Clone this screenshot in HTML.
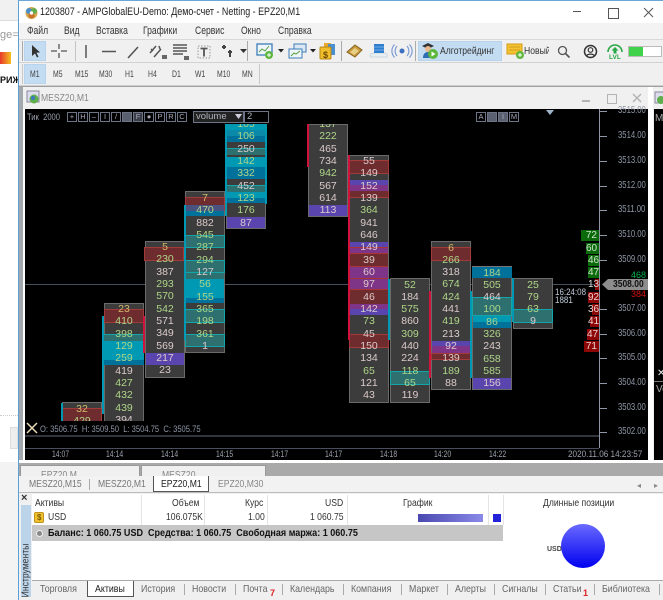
<!DOCTYPE html>
<html><head><meta charset="utf-8">
<style>
html,body{margin:0;padding:0;width:663px;height:600px;overflow:hidden;background:#fff;font-family:"Liberation Sans","DejaVu Sans",sans-serif}
div,span,svg,u,p{position:absolute;margin:0}
.t{white-space:nowrap;font-size:10.5px;color:#222;line-height:13px;transform:scaleX(.82);transform-origin:0 50%}
.o{white-space:nowrap;font-size:10px;line-height:13px}
.bg{background:#3c3c3c;border:1px solid #6a6a6a;box-sizing:border-box;width:40px}
.col{width:40px;text-align:center;font-size:10.5px;z-index:3}
.col b{display:block;height:12.33px;line-height:12.33px;font-weight:400;color:#dccbcb}
.col b.g{color:#aed688}
u{display:block;text-decoration:none;z-index:2;box-sizing:border-box}
.r{background:#6f2c2e;border:1px solid #a23a3a}
.n{background:#6f2c2e}
.e{background:#2e6f70;border:1px solid #14a5a8}
.f{background:#2e6f70}
.c{background:#0099b4}
.a{background:#00719a}
.v{background:#5a45ae}
.m{background:#7e3588}
.px{font-size:10px;color:#8e96a6;left:618px;white-space:nowrap;line-height:12px;z-index:4;transform:scaleX(.77);transform-origin:0 50%}
.tk{left:600px;width:7px;height:1px;background:#8f96a5;z-index:4}
.tm{top:449px;font-size:9.5px;color:#9aa1ae;line-height:12px;white-space:nowrap;transform:scaleX(.72);transform-origin:0 50%;z-index:6}
.d{font-size:10px;color:#ddd;text-align:right;height:11px;line-height:11px;box-sizing:border-box;padding-right:2px;z-index:4}
.dg{background:#0b6b0b;color:#cfe3cf}.dr{background:#8c0606;color:#f2d0d0}
.tb{font-size:9px;color:#444;line-height:12px;white-space:nowrap;top:68px;transform:scaleX(.76);transform-origin:0 50%}
.btn{border:1px solid #6d7486;box-sizing:border-box;width:10px;height:10px;top:112px;font-size:7.5px;color:#aab;line-height:8px;text-align:center;z-index:4}
.mn{font-size:11px;color:#333;top:25px;white-space:nowrap;line-height:13px;transform:scaleX(.78);transform-origin:0 50%}
.tab{font-size:10.5px;color:#666;white-space:nowrap;top:583px;line-height:13px;transform:scaleX(.84);transform-origin:0 50%}
.sep{width:1px;background:#aaa}
</style></head><body>

<!-- left browser remnant -->
<div style="left:0;top:0;width:18px;height:600px;background:#fff"></div>
<div style="left:0;top:0;width:18px;height:20px;background:#f1f1f1"></div>
<div style="left:0;top:20px;width:18px;height:1px;background:#ddd"></div>
<div style="left:0;top:29px;color:#999;font-size:11px;line-height:13px;width:18px;overflow:hidden;white-space:nowrap">ge=5</div>
<div style="left:0;top:52px;width:11px;height:12px;background:linear-gradient(90deg,#e8382a,#f5c020)"></div>
<div style="left:0;top:74px;font-weight:700;font-size:9px;line-height:13px;color:#111;width:18px;overflow:hidden;white-space:nowrap">РИЖ</div>
<div style="left:0;top:415px;width:18px;border-top:1px dotted #ccc"></div>
<div style="left:10px;top:427px;width:8px;height:22px;background:#eee;border:1px solid #ddd;box-sizing:border-box"></div>
<div style="left:0;top:462px;width:18px;height:138px;background:#f3f3f3"></div>

<!-- window frame -->
<div style="left:18px;top:0;width:645px;height:600px;background:#f0f0f0"></div>
<div style="left:18px;top:0;width:1px;height:600px;background:#5a9fd8"></div>
<div style="left:18px;top:0;width:645px;height:1px;background:#6aa6d8"></div>
<div style="left:19px;top:1px;width:644px;height:22px;background:#fff"></div>

<svg style="left:24px;top:5px" width="15" height="15" viewBox="0 0 15 15"><circle cx="7.5" cy="8" r="6" fill="#d8a84c"/><circle cx="5" cy="6" r="3" fill="#4a8fcb"/><circle cx="10" cy="6" r="3" fill="#5fae4e"/><circle cx="7.5" cy="10.5" r="3" fill="#c9702a"/><circle cx="7.5" cy="8" r="1.7" fill="#fff"/></svg>
<div class="t" style="left:40px;top:6px;font-size:11px;transform:scaleX(.81)">1203807 - AMPGlobalEU-Demo: Демо-счет - Netting - EPZ20,M1</div>
<div style="left:573px;top:11px;width:8px;height:1px;background:#555"></div>
<div style="left:608px;top:8px;width:9px;height:9px;border:1px solid #555"></div>
<svg style="left:643px;top:7px" width="11" height="11"><path d="M1 1L10 10M10 1L1 10" stroke="#555" fill="none"/></svg>

<!-- menu -->
<div style="left:19px;top:23px;width:644px;height:16px;background:#f3f3f3"></div>
<div class="mn" style="left:27px">Файл</div><div class="mn" style="left:64px">Вид</div><div class="mn" style="left:96px">Вставка</div><div class="mn" style="left:143px">Графики</div><div class="mn" style="left:195px">Сервис</div><div class="mn" style="left:241px">Окно</div><div class="mn" style="left:278px">Справка</div>

<!-- toolbar 1 -->
<div style="left:19px;top:39px;width:644px;height:1px;background:#d8d8d8"></div>
<div style="left:19px;top:62px;width:644px;height:1px;background:#d2d2d2"></div>
<div style="left:24px;top:41px;width:22px;height:20px;background:#c3dcf2;border:1px solid #b6d4ee;box-sizing:border-box"></div>
<svg style="left:24px;top:41px" width="230" height="20" viewBox="0 0 230 20">
<path d="M8 4l0 11 3-2.5 2 4 1.5-.8-2-4 3.5-.3z" fill="#333"/>
<path d="M27 10h6M37 10h6M35 3v5M35 12v5" stroke="#555" stroke-width="1.3" fill="none"/>
<path d="M62 4v13" stroke="#555" stroke-width="1.5"/>
<path d="M78 10.5h14" stroke="#555" stroke-width="1.5"/>
<path d="M104 17L114 6" stroke="#555" stroke-width="1.6"/>
<path d="M126 12l6-7M130 16l7-8M127 8l2 2M135 5l1 3" stroke="#555" stroke-width="1.5" fill="none"/>
<path d="M138 14h5v4h-5z" fill="#666"/>
<path d="M149 4h14M149 7h14M149 10h14M149 13h10" stroke="#555" stroke-width="1.4"/>
<path d="M160 15h5v4h-5z" fill="#666"/>
<path d="M174 5h12v12h-12z" fill="none" stroke="#999" stroke-dasharray="1.5 1.5"/>
<path d="M176.5 7.5h7M180 7.5v8" stroke="#555" stroke-width="1.8"/>
<path d="M198 6h4M200 4v4M204 11h4M206 9v7" stroke="#444" stroke-width="2"/>
<path d="M216 8h7l-3.5 4z" fill="#333"/>
</svg>
<div class="sep" style="left:22px;top:41px;height:20px"></div>
<div class="sep" style="left:75px;top:41px;height:20px;background:#c4c4c4"></div>
<div class="sep" style="left:247px;top:41px;height:20px"></div>
<svg style="left:254px;top:41px" width="86" height="20" viewBox="0 0 86 20">
<rect x="3" y="3" width="15" height="11" fill="#eef5fb" stroke="#3b7db8" stroke-width="1.3"/><path d="M5 11l3-3 3 2 4-5" stroke="#58a23e" fill="none"/><circle cx="15" cy="14" r="4" fill="#5cb83c"/><path d="M13 14h4M15 12v4" stroke="#fff"/>
<path d="M24 8h6l-3 3.5z" fill="#222"/>
<rect x="40" y="3" width="12" height="8" fill="#dce9f5" stroke="#3b7db8"/><rect x="35" y="8" width="13" height="9" fill="#eef5fb" stroke="#3b7db8"/><path d="M37 15l3-3 2 1 4-3" stroke="#58a23e" fill="none"/>
<path d="M56 8h6l-3 3.5z" fill="#222"/>
<rect x="70" y="2" width="7" height="10" fill="#e8a830"/><rect x="74" y="3" width="7" height="11" fill="#4a90d0"/><rect x="66" y="6" width="11" height="12" rx="1" fill="#f0bd2c" stroke="#b88612"/>
</svg>
<div style="left:323px;top:49px;font-size:9px;line-height:13px;font-weight:700;color:#6b4a00">$</div>
<div class="sep" style="left:341px;top:41px;height:20px"></div>
<svg style="left:346px;top:41px" width="68" height="20" viewBox="0 0 68 20">
<path d="M1 11l8-7 7 5-7 7z" fill="#c79a3c" stroke="#8a6420"/><path d="M4 11l5-4 4 3-5 4z" fill="#e8cf86"/>
<path d="M24 15c0-3 4-3 5-3h9c3 0 4 2 3 4h-16z" fill="#e9eef3" stroke="#cdd6de"/><rect x="28" y="3" width="10" height="9" fill="#2f7fd0"/><path d="M28 6h10M28 9h10" stroke="#86b9ea" stroke-width=".7"/>
<circle cx="56" cy="10" r="2.5" fill="#3d6fc0"/><path d="M51 5c-2.5 3-2.5 7 0 10M61 5c2.5 3 2.5 7 0 10M48.5 3.500c-3.500 4-3.500 9 0 13M63.500 3.500c3.500 4 3.500 9 0 13" stroke="#7c9cd6" stroke-width="1.2" fill="none"/>
</svg>
<div class="sep" style="left:415px;top:41px;height:20px"></div>
<div style="left:418px;top:41px;width:84px;height:20px;background:#c3dcf2;border:1px solid #b6d4ee;box-sizing:border-box"></div>
<svg style="left:420px;top:42px" width="20" height="18" viewBox="0 0 20 18"><path d="M2 4l6-3 6 3-6 3z" fill="#333"/><circle cx="8" cy="7" r="3" fill="#e9b98f"/><path d="M3 16c0-5 3-6 5-6s4 1 5 3l-1 3z" fill="#2f6db5"/><circle cx="13" cy="12" r="5" fill="#5cb83c"/><path d="M11.5 9.5l4 2.5-4 2.5z" fill="#fff"/></svg>
<div class="t" style="left:440px;top:45px;color:#333">Алготрейдинг</div>
<svg style="left:506px;top:42px" width="20" height="18" viewBox="0 0 20 18"><rect x="1" y="2" width="15" height="10" fill="#f4c430" stroke="#d39a10"/><path d="M3 5h11M3 8h11" stroke="#c98f10" stroke-width=".8"/><circle cx="14" cy="13" r="4" fill="#5cb83c"/><path d="M12 13h4M14 11v4" stroke="#fff"/></svg>
<div style="left:524px;top:45px;width:25px;overflow:hidden;height:13px"><div class="t" style="left:0;top:0;color:#333">Новый</div></div>
<svg style="left:557px;top:45px" width="14" height="14"><circle cx="5.5" cy="5.5" r="4" fill="none" stroke="#555" stroke-width="1.3"/><path d="M8.5 8.5l4 4" stroke="#555" stroke-width="1.6"/></svg>
<svg style="left:583px;top:44px" width="15" height="15"><circle cx="7.5" cy="7.5" r="6" fill="none" stroke="#333" stroke-width="1.5"/><circle cx="7.5" cy="6" r="2.3" fill="none" stroke="#333" stroke-width="1.2"/><path d="M3.5 12c1-2.5 7-2.5 8 0" fill="none" stroke="#333" stroke-width="1.2"/></svg>
<svg style="left:606px;top:44px" width="18" height="16"><path d="M2 8a7 7 0 0 1 14 0" fill="none" stroke="#28a745" stroke-width="1.6"/><path d="M9 3l3.5 3.5h-2v3h-3v-3h-2z" fill="#28a745"/></svg>
<div style="left:609px;top:54px;font-size:6.5px;font-weight:700;color:#28a745;line-height:7px">LVL</div>
<div style="left:628px;top:46px;width:34px;height:11px;background:#fff;border:1px solid #bbb;box-sizing:border-box"></div>
<div style="left:629px;top:47px;width:14px;height:9px;background:#3fd24a"></div>

<!-- toolbar 2 -->
<div style="left:19px;top:85px;width:644px;height:1px;background:#cfcfcf"></div>
<div style="left:24px;top:64px;width:22px;height:20px;background:#c3dcf2;border:1px solid #b6d4ee;box-sizing:border-box"></div>
<div class="sep" style="left:22px;top:64px;height:20px;background:#c8c8c8"></div>
<div class="sep" style="left:259px;top:64px;height:20px;background:#c8c8c8"></div>
<div class="tb" style="left:30px">M1</div><div class="tb" style="left:53px">M5</div><div class="tb" style="left:75px">M15</div><div class="tb" style="left:99px">M30</div><div class="tb" style="left:125px">H1</div><div class="tb" style="left:148px">H4</div><div class="tb" style="left:172px">D1</div><div class="tb" style="left:195px">W1</div><div class="tb" style="left:217px">M10</div><div class="tb" style="left:242px">MN</div>

<!-- MDI -->
<div style="left:19px;top:86px;width:644px;height:1px;background:#9f9f9f"></div>
<div style="left:19px;top:87px;width:631px;height:22px;background:#f0f0f0"></div>
<div style="left:19px;top:87px;width:4px;height:374px;background:#a2a8ae"></div>
<div style="left:23px;top:109px;width:2px;height:352px;background:#fff"></div>
<svg style="left:26px;top:90px" width="15" height="15"><rect x="1" y="1" width="12" height="11" fill="#dde" stroke="#889"/><circle cx="8" cy="9" r="4.5" fill="#5fae4e"/><circle cx="7" cy="8" r="2" fill="#3c78c0"/></svg>
<div class="t" style="left:41px;top:92px;color:#888">MESZ20,M1</div>
<div style="left:582px;top:100px;width:8px;height:2px;background:#b4b4b4"></div>
<div style="left:607px;top:94px;width:8px;height:8px;border:1px solid #b4b4b4"></div>
<svg style="left:632px;top:93px" width="10" height="10"><path d="M1 1L9 9M9 1L1 9" stroke="#b4b4b4" stroke-width="1.5"/></svg>

<!-- right neighbour window -->
<div style="left:648px;top:87px;width:5px;height:374px;background:#fff"></div>
<div style="left:653px;top:87px;width:10px;height:22px;background:#f0f0f0"></div>
<svg style="left:654px;top:91px" width="9" height="14"><rect x="1" y="1" width="12" height="11" fill="#dde" stroke="#889"/><circle cx="7" cy="9" r="4" fill="#5fae4e"/></svg>
<div style="left:654px;top:109px;width:9px;height:351px;background:#000"></div>
<div style="left:654px;top:381px;width:9px;height:1px;background:#777"></div>
<div style="left:655px;top:112px;color:#aaa;font-size:10px;line-height:13px;width:8px;overflow:hidden">Mi</div>
<div style="left:657px;top:367px;color:#eee;font-size:10px;line-height:13px">✕</div>
<div style="left:656px;top:383px;color:#aaa;font-size:10px;line-height:13px;width:7px;overflow:hidden">Ve</div>

<!-- chart -->
<div style="left:25px;top:109px;width:623px;height:351px;background:#000"></div>
<div style="left:25px;top:284px;width:575px;height:1px;background:#4a4f5f"></div>

<!-- candle backgrounds -->
<div class="bg" style="left:62px;top:402px;height:30px"></div>
<div class="bg" style="left:104px;top:303px;height:130px"></div>
<div class="bg" style="left:145px;top:241px;height:137px"></div>
<div class="bg" style="left:185px;top:191px;height:162px"></div>
<div class="bg" style="left:226px;top:124px;height:105px"></div>
<div class="bg" style="left:308px;top:124px;height:93px"></div>
<div class="bg" style="left:349px;top:155px;height:248px"></div>
<div class="bg" style="left:390px;top:278px;height:125px"></div>
<div class="bg" style="left:431px;top:241px;height:149px"></div>
<div class="bg" style="left:472px;top:266px;height:124px"></div>
<div class="bg" style="left:513px;top:278px;height:51px"></div>

<!-- overlays col0 -->
<u class="r" style="left:62px;top:408px;width:40px;height:14px"></u>
<u class="c" style="left:61px;top:403px;width:2px;height:19px"></u>
<!-- col1 -->
<u class="r" style="left:104px;top:309px;width:40px;height:14px"></u>
<u class="f" style="left:104px;top:334px;width:40px;height:7px;border-top:1px solid #14a5a8"></u>
<u class="c" style="left:104px;top:341px;width:40px;height:19px"></u>
<u class="a" style="left:104px;top:360px;width:40px;height:5px"></u>
<u class="c" style="left:102px;top:316px;width:2px;height:98px"></u>
<u style="left:143px;top:316px;width:2px;height:37px;background:#d0123c"></u>
<!-- col2 -->
<u class="r" style="left:144px;top:247px;width:40px;height:14px"></u>
<u class="v" style="left:146px;top:353px;width:38px;height:12px"></u>
<!-- col3 -->
<u class="r" style="left:185px;top:197px;width:40px;height:14px"></u>
<u style="left:186px;top:205px;width:38px;height:6px;background:#4a5280"></u>
<u class="a" style="left:186px;top:211px;width:38px;height:5px"></u>
<u class="e" style="left:185px;top:235px;width:40px;height:13px"></u>
<u class="e" style="left:185px;top:260px;width:40px;height:13px"></u>
<u class="f" style="left:186px;top:273px;width:38px;height:6px"></u>
<u class="c" style="left:186px;top:279px;width:38px;height:19px"></u>
<u class="a" style="left:186px;top:298px;width:38px;height:5px"></u>
<u class="e" style="left:185px;top:309px;width:40px;height:14px"></u>
<u class="e" style="left:185px;top:334px;width:40px;height:13px"></u>
<u class="c" style="left:184px;top:205px;width:2px;height:135px"></u>
<u class="c" style="left:225px;top:124px;width:2px;height:92px"></u>
<!-- col4 -->
<u class="c" style="left:227px;top:124px;width:38px;height:6px"></u>
<u style="left:227px;top:130px;width:38px;height:6px;background:#0a8aa8"></u>
<u class="a" style="left:227px;top:136px;width:38px;height:6px"></u>
<u class="f" style="left:227px;top:148px;width:38px;height:7px;border-top:1px solid #14a5a8"></u>
<u class="c" style="left:227px;top:157px;width:38px;height:10px"></u>
<u class="a" style="left:227px;top:167px;width:38px;height:12px"></u>
<u class="f" style="left:227px;top:185px;width:38px;height:7px;border-top:1px solid #14a5a8"></u>
<u class="c" style="left:227px;top:192px;width:38px;height:6px"></u>
<u class="a" style="left:227px;top:198px;width:38px;height:5px"></u>
<u class="v" style="left:227px;top:217px;width:38px;height:11px"></u>
<u class="c" style="left:265px;top:124px;width:2px;height:80px"></u>
<!-- col5 -->
<u class="v" style="left:309px;top:205px;width:38px;height:11px"></u>
<u style="left:307px;top:124px;width:2px;height:43px;background:#d0123c"></u>
<!-- col6 -->
<u class="r" style="left:349px;top:160px;width:40px;height:14px"></u>
<u class="v" style="left:350px;top:180px;width:38px;height:5px"></u>
<u class="m" style="left:350px;top:185px;width:38px;height:6px"></u>
<u class="r" style="left:349px;top:191px;width:40px;height:7px;border-top:0"></u>
<u class="v" style="left:350px;top:242px;width:38px;height:5px"></u>
<u class="m" style="left:350px;top:247px;width:38px;height:6px;border-top:1px solid #a33"></u>
<u class="n" style="left:350px;top:253px;width:38px;height:14px;border-top:1px solid #a33;border-bottom:1px solid #a33"></u>
<u class="m" style="left:350px;top:267px;width:38px;height:11px"></u>
<u class="m" style="left:350px;top:278px;width:38px;height:12px;border-top:1px solid #a33;border-bottom:1px solid #a33"></u>
<u class="n" style="left:350px;top:290px;width:38px;height:14px"></u>
<u class="m" style="left:350px;top:304px;width:38px;height:5px"></u>
<u class="v" style="left:350px;top:309px;width:38px;height:6px"></u>
<u class="r" style="left:349px;top:334px;width:40px;height:14px"></u>
<u style="left:348px;top:155px;width:2px;height:185px;background:#d0123c"></u>
<!-- col7 -->
<u class="c" style="left:388px;top:279px;width:2px;height:61px"></u>
<u class="e" style="left:390px;top:371px;width:40px;height:14px"></u>
<!-- col8 -->
<u class="r" style="left:431px;top:247px;width:40px;height:14px"></u>
<u class="v" style="left:432px;top:341px;width:38px;height:5px"></u>
<u class="m" style="left:432px;top:346px;width:38px;height:7px"></u>
<u class="r" style="left:431px;top:353px;width:40px;height:7px"></u>
<u style="left:429px;top:291px;width:2px;height:87px;background:#d0123c"></u>
<!-- col9 -->
<u class="a" style="left:472px;top:266px;width:40px;height:12px;border-top:1px solid #777"></u>
<u class="e" style="left:472px;top:297px;width:40px;height:19px"></u>
<u class="c" style="left:473px;top:316px;width:38px;height:6px"></u>
<u class="a" style="left:473px;top:322px;width:38px;height:6px"></u>
<u class="v" style="left:473px;top:378px;width:38px;height:11px"></u>
<u class="c" style="left:470px;top:291px;width:2px;height:87px"></u>
<!-- col10 -->
<u class="e" style="left:513px;top:309px;width:40px;height:14px"></u>
<u class="c" style="left:512px;top:278px;width:2px;height:44px"></u>

<!-- candle text -->
<div class="col" style="left:62px;top:402.5px"><b class="g" style="color:#d3b96a">32</b><b class="g">429</b></div>
<div class="col" style="left:104px;top:303px"><b class="g" style="color:#d3b96a">23</b><b class="g">410</b><b class="g">398</b><b class="g">129</b><b class="g">259</b><b>419</b><b class="g">427</b><b class="g">432</b><b class="g">439</b><b>394</b></div>
<div class="col" style="left:145px;top:241px"><b class="g" style="color:#d3b96a">5</b><b class="g">230</b><b>387</b><b class="g">293</b><b class="g">570</b><b class="g">542</b><b>571</b><b>349</b><b>569</b><b>217</b><b>23</b></div>
<div class="col" style="left:185px;top:192px"><b style="color:#d3b96a">7</b><b class="g">470</b><b>882</b><b class="g">545</b><b class="g">287</b><b class="g">294</b><b>127</b><b class="g">56</b><b class="g">155</b><b class="g">365</b><b class="g">198</b><b class="g">361</b><b>1</b></div>
<div style="left:226px;top:124px;width:40px;height:105px;overflow:hidden;z-index:3"><div class="col" style="left:0;top:-6px"><b class="g">105</b><b class="g">106</b><b>250</b><b class="g">142</b><b class="g">332</b><b>452</b><b class="g">123</b><b class="g">176</b><b>87</b></div></div>
<div style="left:308px;top:124px;width:40px;height:93px;overflow:hidden;z-index:3"><div class="col" style="left:0;top:-6px"><b class="g">137</b><b class="g">222</b><b>465</b><b>734</b><b class="g">942</b><b>567</b><b>614</b><b>113</b></div></div>
<div class="col" style="left:349px;top:155px"><b>55</b><b>149</b><b>152</b><b>139</b><b class="g">364</b><b>941</b><b>646</b><b>149</b><b>39</b><b>60</b><b>97</b><b>46</b><b>142</b><b class="g">73</b><b>45</b><b>150</b><b>134</b><b class="g">65</b><b>121</b><b>43</b></div>
<div class="col" style="left:390px;top:278.5px"><b class="g">52</b><b>184</b><b class="g">575</b><b>860</b><b class="g">309</b><b>440</b><b>224</b><b class="g">118</b><b class="g">65</b><b>119</b></div>
<div class="col" style="left:431px;top:241.5px"><b style="color:#d3b96a">6</b><b class="g">266</b><b>318</b><b class="g">674</b><b class="g">424</b><b>441</b><b class="g">419</b><b>213</b><b>92</b><b>139</b><b class="g">189</b><b>88</b></div>
<div class="col" style="left:472px;top:266.5px"><b class="g">184</b><b class="g">505</b><b>464</b><b class="g">100</b><b class="g">86</b><b class="g">326</b><b>243</b><b class="g">658</b><b class="g">585</b><b>156</b></div>
<div class="col" style="left:513px;top:278.5px"><b class="g">25</b><b class="g">79</b><b class="g">63</b><b>9</b></div>

<!-- cover + OHLC -->
<div style="left:25px;top:421px;width:574px;height:39px;background:#000;z-index:5"></div>
<div style="left:25px;top:435px;width:574px;height:2px;background:#33363f;z-index:6"></div>
<div style="left:25px;top:448px;width:574px;height:1px;background:#4a4f5f;z-index:6"></div>
<svg style="left:26px;top:422px;z-index:6" width="12" height="12"><path d="M1 1l10 10M11 1L3 9M1 11l3-3" stroke="#e8dcb8" stroke-width="1.5"/></svg>
<div class="t" style="left:40px;top:423px;font-size:9.5px;color:#8e96a6;z-index:6;transform:scaleX(.8)">O: 3506.75&nbsp; H: 3509.50&nbsp; L: 3504.75&nbsp; C: 3505.75</div>
<div class="tm" style="left:52px">14:07</div><div class="tm" style="left:106px">14:14</div><div class="tm" style="left:161px">14:14</div><div class="tm" style="left:216px">14:15</div><div class="tm" style="left:271px">14:17</div><div class="tm" style="left:325px">14:17</div><div class="tm" style="left:380px">14:18</div><div class="tm" style="left:434px">14:20</div><div class="tm" style="left:489px">14:22</div><div class="tm" style="left:568px;transform:scaleX(.86)">2020.11.06 14:23:57</div>

<!-- top indicators bar -->
<div class="t" style="left:27px;top:111px;font-size:9.5px;color:#9aa1ae;z-index:4;transform:scaleX(.8)">Тик&nbsp; 2000</div>
<div class="btn" style="left:67px">+</div><div class="btn" style="left:78px">H</div><div class="btn" style="left:89px">–</div><div class="btn" style="left:100px">I</div><div class="btn" style="left:111px">/</div><div class="btn" style="left:122px;background:#5a6070"></div><div class="btn" style="left:133px;background:#3a3e48">F</div><div class="btn" style="left:144px">●</div><div class="btn" style="left:155px">P</div><div class="btn" style="left:166px">R</div><div class="btn" style="left:177px">C</div>
<div style="left:193px;top:111px;width:51px;height:12px;border:1px solid #6d7486;box-sizing:border-box;background:#222;font-size:9.5px;color:#b0b4bd;line-height:10px;padding-left:2px;z-index:4">volume</div>
<svg style="left:235px;top:114px;z-index:5" width="7" height="6"><path d="M0 0h7L3.5 5z" fill="#ccd"/></svg>
<div style="left:244px;top:111px;width:25px;height:12px;border:1px solid #6d7486;box-sizing:border-box;font-size:9.5px;color:#b0b4bd;line-height:10px;padding-left:2px;z-index:4">2</div>
<div class="btn" style="left:476px">A</div><div class="btn" style="left:487px;background:#5a6070"></div><div class="btn" style="left:498px;background:#5a6070">I</div><div class="btn" style="left:509px">M</div>
<svg style="left:546px;top:110px;z-index:4" width="8" height="5"><path d="M0 0h8L4 5z" fill="#9fb3cc"/></svg>

<!-- axis -->
<div style="left:599px;top:109px;width:1px;height:339px;background:#8f96a5;z-index:6"></div>
<div class="tk" style="top:111px"></div><div class="tk" style="top:136px"></div><div class="tk" style="top:161px"></div><div class="tk" style="top:186px"></div><div class="tk" style="top:210px"></div><div class="tk" style="top:235px"></div><div class="tk" style="top:260px"></div><div class="tk" style="top:309px"></div><div class="tk" style="top:334px"></div><div class="tk" style="top:358px"></div><div class="tk" style="top:383px"></div><div class="tk" style="top:408px"></div><div class="tk" style="top:432px"></div>
<div class="px" style="top:105px">3515.00</div><div class="px" style="top:130px">3514.00</div><div class="px" style="top:155px">3513.00</div><div class="px" style="top:180px">3512.00</div><div class="px" style="top:204px">3511.00</div><div class="px" style="top:229px">3510.00</div><div class="px" style="top:254px">3509.00</div><div class="px" style="top:303px">3507.00</div><div class="px" style="top:328px">3506.00</div><div class="px" style="top:352px">3505.00</div><div class="px" style="top:377px">3504.00</div><div class="px" style="top:402px">3503.00</div><div class="px" style="top:426px">3502.00</div>

<!-- DOM -->
<div class="d dg" style="left:581px;top:230px;width:18px">72</div>
<div class="d dg" style="left:586px;top:243px;width:13px">60</div>
<div class="d dg" style="left:588px;top:255px;width:11px">46</div>
<div class="d dg" style="left:588px;top:267px;width:11px">47</div>
<div class="d dr" style="left:595px;top:279px;width:4px;padding:0"></div>
<div class="o" style="left:588px;top:278px;color:#ddd;z-index:5">13</div>
<div class="d dr" style="left:588px;top:292px;width:11px">92</div>
<div class="d dr" style="left:592px;top:304px;width:7px;padding:0"></div>
<div class="o" style="left:588px;top:303px;color:#f2d0d0;z-index:5">36</div>
<div class="d dr" style="left:590px;top:316px;width:9px;padding:0"></div>
<div class="o" style="left:588px;top:315px;color:#f2d0d0;z-index:5">41</div>
<div class="d dr" style="left:587px;top:329px;width:12px">47</div>
<div class="d dr" style="left:584px;top:341px;width:15px">71</div>

<div class="o" style="left:631px;top:269px;font-size:9px;color:#00b050;z-index:5">468</div>
<div class="o" style="left:631px;top:288px;font-size:9px;color:#d81010;z-index:5">384</div>
<svg style="left:602px;top:279px;z-index:5" width="46" height="11"><path d="M0 5.5L6 0H46V11H6z" fill="#8d8d8d"/></svg>
<div class="t" style="left:613px;top:278px;font-size:10px;color:#111;font-weight:700;z-index:6;transform:scaleX(.85)">3508.00</div>
<div class="t" style="left:555px;top:286px;font-size:9.5px;color:#c4cedc;z-index:6;transform:scaleX(.84)">16:24:08</div>
<div class="t" style="left:555px;top:294px;font-size:9.5px;color:#c4cedc;z-index:6;transform:scaleX(.84)">1881</div>

<!-- lower MDI -->
<div style="left:19px;top:460px;width:644px;height:3px;background:#fff"></div>
<div style="left:19px;top:463px;width:644px;height:14px;background:#a9a9a9"></div>
<div style="left:20px;top:465px;width:120px;height:12px;background:#f0f0f0;border:1px solid #999;box-sizing:border-box"></div>
<div style="left:141px;top:465px;width:125px;height:12px;background:#f0f0f0;border:1px solid #999;box-sizing:border-box"></div>
<div class="t" style="left:41px;top:469px;color:#888">EPZ20,M</div>
<div class="t" style="left:162px;top:469px;color:#888">MESZ20,</div>

<!-- chart tabs -->
<div style="left:19px;top:476px;width:644px;height:16px;background:#f2f2f2"></div>
<div style="left:19px;top:492px;width:644px;height:1px;background:#bdbdbd"></div>
<div class="t" style="left:29px;top:478px;color:#777">MESZ20,M15</div>
<div class="sep" style="left:89px;top:479px;height:11px"></div>
<div class="t" style="left:98px;top:478px;color:#777">MESZ20,M1</div>
<div style="left:153px;top:476px;width:56px;height:16px;background:#fff;border:1px solid #555;border-top:0;box-sizing:border-box"></div>
<div class="t" style="left:161px;top:478px;color:#222">EPZ20,M1</div>
<div class="t" style="left:218px;top:478px;color:#888">EPZ20,M30</div>
<div class="o" style="left:637px;top:479px;font-size:8px;color:#888">◂</div><div class="o" style="left:654px;top:479px;font-size:8px;color:#888">▸</div>

<!-- panel -->
<div style="left:19px;top:493px;width:13px;height:107px;background:#f0f0f0"></div>
<div class="o" style="left:21px;top:492px;font-size:11px;font-weight:700;color:#333">×</div>
<div style="left:21px;top:505px;width:10px;height:92px;background:#bcd4ea"></div>
<div style="left:-9px;top:564px;width:70px;height:13px;line-height:13px;font-size:10.5px;color:#333;transform:rotate(-90deg) scaleX(.82);white-space:nowrap;text-align:center">Инструменты</div>
<div style="left:32px;top:494px;width:631px;height:86px;background:#fff"></div>
<div class="t" style="left:35px;top:497px;color:#333">Активы</div>
<div class="t" style="left:172px;top:497px;color:#333">Объем</div>
<div class="t" style="left:245px;top:497px;color:#333">Курс</div>
<div class="t" style="left:325px;top:497px;color:#333">USD</div>
<div class="t" style="left:403px;top:497px;color:#333">График</div>
<div class="t" style="left:543px;top:497px;color:#333">Длинные позиции</div>
<div class="sep" style="left:141px;top:495px;height:30px;background:#e4e4e4"></div>
<div class="sep" style="left:204px;top:495px;height:30px;background:#e4e4e4"></div>
<div class="sep" style="left:267px;top:495px;height:30px;background:#e4e4e4"></div>
<div class="sep" style="left:347px;top:495px;height:30px;background:#e4e4e4"></div>
<div class="sep" style="left:488px;top:495px;height:30px;background:#e4e4e4"></div>
<div class="sep" style="left:503px;top:495px;height:30px;background:#e4e4e4"></div>
<div style="left:34px;top:512px;width:10px;height:11px;background:#f0c22e;border:1px solid #c2931a;box-sizing:border-box;border-radius:2px"></div>
<div class="o" style="left:37px;top:511px;font-size:8px;color:#7a5a00;font-weight:700">$</div>
<div class="t" style="left:48px;top:511px;color:#333">USD</div>
<div class="t" style="left:166px;top:511px;color:#333">106.075K</div>
<div class="t" style="left:248px;top:511px;color:#333">1.00</div>
<div class="t" style="left:310px;top:511px;color:#333">1 060.75</div>
<div style="left:418px;top:514px;width:65px;height:8px;background:linear-gradient(90deg,#4848b0,#8a8ae8)"></div>
<div style="left:493px;top:514px;width:8px;height:8px;background:#2222d8"></div>
<div style="left:32px;top:525px;width:471px;height:16px;background:#c6c6c6"></div>
<div style="left:36px;top:530px;width:5px;height:5px;border-radius:50%;background:#888;border:1px solid #eee"></div>
<div class="t" style="left:48px;top:527px;font-size:10.5px;font-weight:700;color:#111;transform:scaleX(.86)">Баланс: 1 060.75 USD&nbsp; Средства: 1 060.75&nbsp; Свободная маржа: 1 060.75</div>
<div style="left:561px;top:524px;width:44px;height:44px;border-radius:50%;background:linear-gradient(180deg,#6a6aff,#0000f0)"></div>
<div style="left:547px;top:545px;font-size:7px;color:#444;line-height:9px;font-weight:700">USD</div>

<!-- bottom tabs -->
<div style="left:32px;top:580px;width:631px;height:1px;background:#aaa"></div>
<div style="left:32px;top:581px;width:631px;height:19px;background:#f0f0f0"></div>
<div style="left:87px;top:581px;width:47px;height:16px;background:#fff;border:1px solid #555;border-top:0;box-sizing:border-box"></div>
<div class="tab" style="left:40px">Торговля</div><div class="tab" style="left:95px;color:#222">Активы</div><div class="tab" style="left:141px">История</div><div class="tab" style="left:192px">Новости</div><div class="tab" style="left:243px">Почта</div><div class="o" style="left:270px;top:587px;font-size:9px;color:#e02020;font-weight:700">7</div><div class="tab" style="left:290px">Календарь</div><div class="tab" style="left:351px">Компания</div><div class="tab" style="left:409px">Маркет</div><div class="tab" style="left:455px">Алерты</div><div class="tab" style="left:502px">Сигналы</div><div class="tab" style="left:553px">Статьи</div><div class="o" style="left:583px;top:587px;font-size:9px;color:#e02020;font-weight:700">1</div><div class="tab" style="left:602px">Библиотека</div>
<div class="sep" style="left:184px;top:584px;height:11px"></div><div class="sep" style="left:235px;top:584px;height:11px"></div><div class="sep" style="left:282px;top:584px;height:11px"></div><div class="sep" style="left:343px;top:584px;height:11px"></div><div class="sep" style="left:401px;top:584px;height:11px"></div><div class="sep" style="left:447px;top:584px;height:11px"></div><div class="sep" style="left:494px;top:584px;height:11px"></div><div class="sep" style="left:545px;top:584px;height:11px"></div><div class="sep" style="left:594px;top:584px;height:11px"></div><div class="sep" style="left:659px;top:584px;height:11px"></div>

</body></html>
